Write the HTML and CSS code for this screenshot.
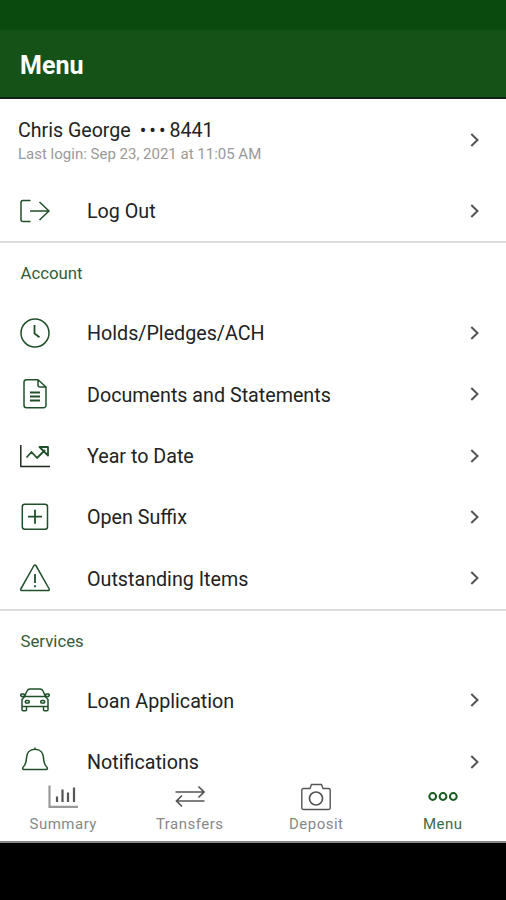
FILE: index.html
```html
<!DOCTYPE html>
<html lang="en">
<head>
    <meta charset="UTF-8">
    <meta name="viewport" content="width=device-width, initial-scale=1.0">
    <title>Menu</title>
    <link rel="stylesheet" href="styles.css">
</head>
<body>
    <div class="status-bar"></div>
    <header class="app-bar">
        <h1>Menu</h1>
    </header>

    <main class="content">
        <!-- Profile -->
        <section class="section">
            <a class="profile">
                <div class="profile-text">
                    <div class="profile-name"><span>Chris George</span><span class="dots">•••</span><span>8441</span></div>
                    <div class="last-login">Last login: Sep 23, 2021 at 11:05 AM</div>
                </div>
                <svg class="chevron" viewBox="0 0 10 16"><path d="M1.3 2l6.2 6-6.2 6"/></svg>
            </a>
            <a class="row">
                <svg class="icon" viewBox="0 0 30 30"><path d="M10.5 4.500H3a2 2 0 0 0-2 2v17a2 2 0 0 0 2 2h7.500M10 15h19M19.500 6l9.500 9-9.500 9"/></svg>
                <span class="label">Log Out</span>
                <svg class="chevron" viewBox="0 0 10 16"><path d="M1.3 2l6.2 6-6.2 6"/></svg>
            </a>
        </section>

        <!-- Account -->
        <section class="section">
            <h2>Account</h2>
            <a class="row">
                <svg class="icon" viewBox="0 0 30 30"><circle cx="15" cy="15" r="14"/><path class="thick" d="M14.500 7v8.500l5 3.800"/></svg>
                <span class="label">Holds/Pledges/ACH</span>
                <svg class="chevron" viewBox="0 0 10 16"><path d="M1.3 2l6.2 6-6.2 6"/></svg>
            </a>
            <a class="row">
                <svg class="icon" viewBox="0 0 30 30"><path d="M18 .8H6.500a2.500 2.500 0 0 0-2.500 2.500v23a2.500 2.500 0 0 0 2.500 2.500h17a2.500 2.500 0 0 0 2.500-2.500V8zM18 .8V6a2 2 0 0 0 2 2h6"/><path class="thick" d="M10 13.500h10M10 17.500h10M10 21.500h10"/></svg>
                <span class="label">Documents and Statements</span>
                <svg class="chevron" viewBox="0 0 10 16"><path d="M1.3 2l6.2 6-6.2 6"/></svg>
            </a>
            <a class="row">
                <svg class="icon" viewBox="0 0 30 30"><path class="dark" d="M.8 4v21.500H30"/><path class="thick" d="M6.500 16.500l5-5.500 5.500 6 8-8M19.500 6H28v8.500z"/></svg>
                <span class="label">Year to Date</span>
                <svg class="chevron" viewBox="0 0 10 16"><path d="M1.3 2l6.2 6-6.2 6"/></svg>
            </a>
            <a class="row">
                <svg class="icon" viewBox="0 0 30 30"><rect x="2.300" y="2.200" width="25.200" height="25" rx="2.500"/><path class="thick" d="M8 14.700h14M15 7.700v14"/></svg>
                <span class="label">Open Suffix</span>
                <svg class="chevron" viewBox="0 0 10 16"><path d="M1.3 2l6.2 6-6.2 6"/></svg>
            </a>
            <a class="row">
                <svg class="icon" viewBox="0 0 30 30"><path d="M14 2.500a1.100 1.100 0 0 1 1.900 0L29.200 26a1 1 0 0 1-.9 1.500H1.700A1 1 0 0 1 .8 26z"/><path class="thick" d="M15 11v9M15 22.300v2"/></svg>
                <span class="label">Outstanding Items</span>
                <svg class="chevron" viewBox="0 0 10 16"><path d="M1.3 2l6.2 6-6.2 6"/></svg>
            </a>
        </section>

        <!-- Services -->
        <section class="section">
            <h2>Services</h2>
            <a class="row">
                <svg class="icon" viewBox="0 0 30 30"><path d="M5 10.500l2-4.500q.8-2 3-2h10q2.200 0 3 2l2 4.500M4.800 11.500h20.400M4.800 11.500L2 14.500v7h26v-7l-2.800-3M4.800 11.500L4 9H1.500q-1 .3-.7 1.500l.7 1h3.300M25.200 11.500L26 9h2.500q1 .3.700 1.500l-.7 1h-3.300M2 21.500v3.200q0 1 1 1h2.500q1 0 1-1v-3.200M23.500 21.500v3.200q0 1 1 1H27q1 0 1-1v-3.200"/><rect x="5.300" y="15.500" width="4" height="2.600" rx="1.200"/><rect x="20.700" y="15.500" width="4" height="2.600" rx="1.200"/></svg>
                <span class="label">Loan Application</span>
                <svg class="chevron" viewBox="0 0 10 16"><path d="M1.3 2l6.2 6-6.2 6"/></svg>
            </a>
            <a class="row">
                <svg class="icon" viewBox="0 0 30 30"><path d="M15 .5v2M15 2.200c5.500 0 8.300 3.800 8.500 8.500.2 5.200 1 7.500 3.600 9.800q.9 1.800-1 2H3.900q-1.900-.2-1-2C5.500 18.200 6.300 15.900 6.500 10.700c.2-4.700 3-8.500 8.500-8.500z"/></svg>
                <span class="label">Notifications</span>
                <svg class="chevron" viewBox="0 0 10 16"><path d="M1.3 2l6.2 6-6.2 6"/></svg>
            </a>
        </section>
    </main>

    <nav class="tab-bar">
        <a class="tab">
            <svg class="tab-icon" viewBox="0 0 30 30"><path class="axis" d="M1.500 3.500v21.300H30"/><path class="bars" d="M9 14.500v5.500M14.500 7.500V20M20 10.500V20M26 5.500V20"/></svg>
            <span>Summary</span>
        </a>
        <a class="tab">
            <svg class="tab-icon" viewBox="0 0 30 30"><path d="M.5 10h28.500M23.500 4.500L29 10l-5.500 5.500M29.500 19H1.500M7 13.500L1.500 19 7 24.500"/></svg>
            <span>Transfers</span>
        </a>
        <a class="tab">
            <svg class="tab-icon" viewBox="0 0 30 30"><path class="thin" d="M2.500 6.500H9l1.500-4h10l1.500 4h5.500a1.700 1.700 0 0 1 1.700 1.700v17.600a1.700 1.700 0 0 1-1.700 1.700h-25a1.700 1.700 0 0 1-1.700-1.700V8.200a1.700 1.700 0 0 1 1.700-1.700z"/><circle cx="15" cy="16.500" r="6.500"/></svg>
            <span>Deposit</span>
        </a>
        <a class="tab active">
            <svg class="tab-icon" viewBox="0 0 30 30"><circle cx="4.700" cy="14.500" r="3.400"/><circle cx="15" cy="14.500" r="3.400"/><circle cx="25.300" cy="14.500" r="3.400"/></svg>
            <span>Menu</span>
        </a>
    </nav>
    <div class="system-nav"></div>
</body>
</html>
```
FILE: styles.css
```css
* {
    box-sizing: border-box;
}

body {
    margin: 0;
    height: 900px;
    display: flex;
    flex-direction: column;
    overflow: hidden;
    font-family: Roboto, sans-serif;
    background-color: #fff;
    color: #222;
}

h1, h2 {
    margin: 0;
}

.status-bar {
    flex: none;
    height: 30px;
    background-color: #0a4a0e;
}

.app-bar {
    flex: none;
    display: flex;
    align-items: center;
    height: 69px;
    padding: 4px 20px 0;
    background-color: #145218;
    border-bottom: 2px solid #102312;
}

.app-bar h1 {
    font-size: 25px;
    font-weight: 700;
    color: #fff;
}

.content {
    flex: 1;
    min-height: 0;
}

.section {
    border-bottom: 2px solid #dcdcdc;
}

.section:last-child {
    border-bottom: none;
}

.profile {
    display: flex;
    align-items: center;
    justify-content: space-between;
    height: 81px;
    padding: 0 26px 0 18px;
}

.profile-text {
    padding-top: 4px;
}

.profile-name {
    display: flex;
    font-size: 19.6px;
    line-height: 24px;
}

.dots {
    margin: 0 1px 0 9px;
    letter-spacing: 3px;
}

.last-login {
    font-size: 15px;
    line-height: 22px;
    color: #999;
}

.row {
    display: flex;
    align-items: center;
    height: 61.3px;
    padding: 0 26px 0 20px;
}

.section h2 {
    padding: 1px 0 0 20.5px;
    font-size: 16.8px;
    font-weight: 400;
    line-height: 58px;
    color: #345c38;
}

.label {
    flex: 1;
    margin-left: 37px;
    padding-top: 2px;
    font-size: 19.7px;
}

.icon {
    width: 30px;
    height: 30px;
    fill: none;
    stroke: #20502a;
    stroke-width: 1.5;
    stroke-linejoin: round;
}

.icon .thick {
    stroke-width: 1.8;
}

.icon .dark {
    stroke: #1c2b1e;
}

.chevron {
    width: 10px;
    height: 16px;
    fill: none;
    stroke: #555;
    stroke-width: 2;
}

/* Bottom tabs */
.tab-bar {
    flex: none;
    display: flex;
    height: 63px;
    background-color: #fff;
    border-bottom: 2px solid #888;
}

.tab {
    flex: 1;
    display: flex;
    flex-direction: column;
    align-items: center;
    gap: 3px;
    padding-top: 2px;
    font-size: 15px;
    letter-spacing: 0.5px;
    color: #888;
}

.tab.active {
    color: #3d6b42;
}

.tab-icon {
    width: 30px;
    height: 30px;
    fill: none;
    stroke: #555;
    stroke-width: 1.7;
}

.tab-icon .thin {
    stroke-width: 1.4;
}

.tab-icon .axis {
    stroke: #999;
    stroke-width: 2.2;
}

.tab-icon .bars {
    stroke-width: 2.2;
}

.tab.active .tab-icon {
    stroke: #175a20;
    stroke-width: 2;
}

.system-nav {
    flex: none;
    height: 57px;
    background-color: #000;
}
```
